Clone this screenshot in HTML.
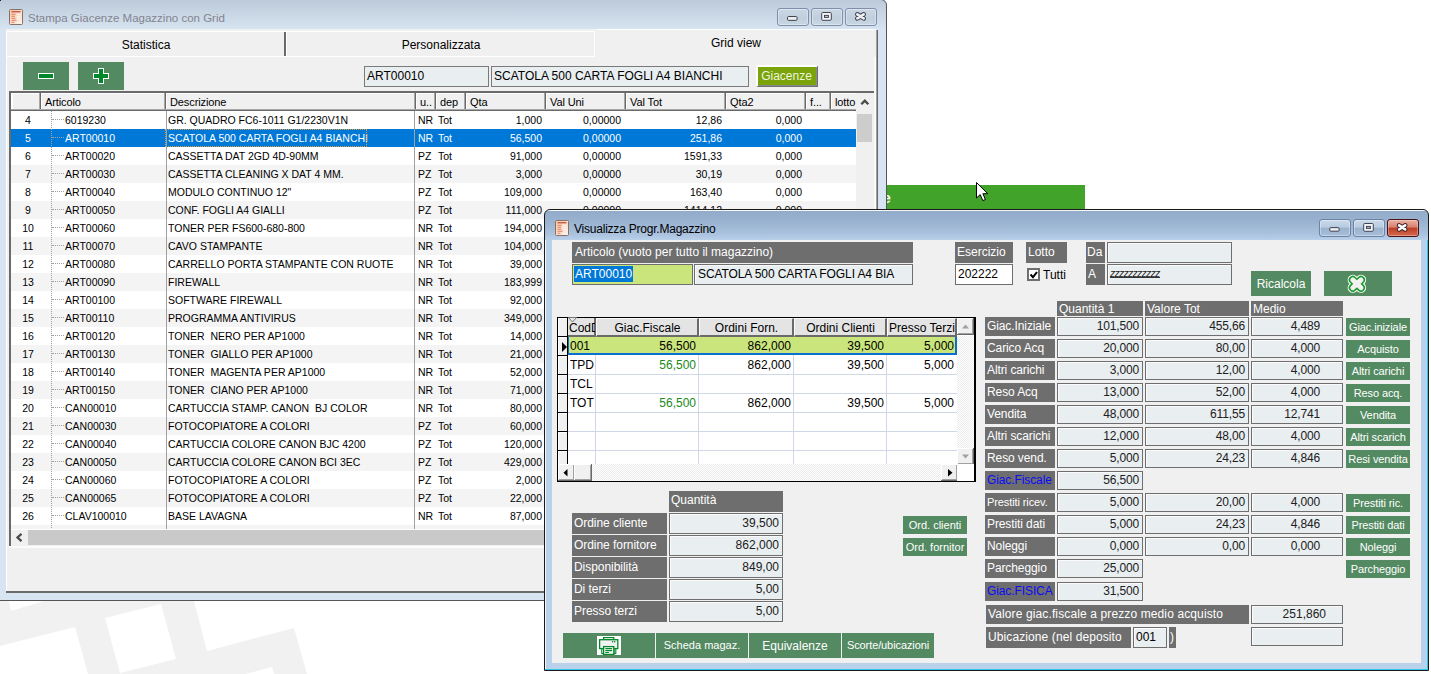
<!DOCTYPE html><html><head><meta charset="utf-8"><style>
html,body{margin:0;padding:0;}
body{width:1431px;height:674px;overflow:hidden;position:relative;background:#fff;font-family:"Liberation Sans",sans-serif;font-size:11px;color:#000;}
div{position:absolute;box-sizing:border-box;}
.t{white-space:pre;line-height:1;}
.g{font-size:10.5px;}
.w{font-size:12px;}
.lb{background:#6e6e6e;}
.in{background:#e9eef0;border:1px solid #6e6e6e;box-shadow:inset 1px 1px 0 #fff;}
.bt{background:#548a62;}
.b3{background:#f0f0f0;box-shadow:inset -1px -1px 0 #696969,inset 1px 1px 0 #fff,inset -2px -2px 0 #a0a0a0;}
.chk{background-color:#fff;background-image:linear-gradient(45deg,#ececec 25%,transparent 25%,transparent 75%,#ececec 75%),linear-gradient(45deg,#ececec 25%,transparent 25%,transparent 75%,#ececec 75%);background-size:2px 2px;background-position:0 0,1px 1px;}
</style></head><body>
<svg style="position:absolute;left:0;top:0" width="1431" height="674">
<polygon fill="#f1f1f1" points="0,601 9,601 11,611 44,601 194,601 207,651 294,628 307,674 274,674 272,667 246,674 88,674 75,627 0,646"/>
<polygon fill="#fff" points="105,618 161,604 176,659 120,673"/>
</svg>
<div style="left:886px;top:185px;width:199px;height:24px;background:#42a32b;overflow:hidden;"><div class="t" style="left:-3px;top:6px;font-size:14px;font-weight:bold;color:#fff;">e</div></div>
<div style="left:-1px;top:-1px;width:888px;height:602px;border:1px solid #555;border-radius:0 6px 0 0;background:linear-gradient(#bccad9 0px,#c9d7e5 14px,#d3e0ee 26px,#d7e4f2 30px,#d7e4f2);"></div>
<div style="left:0px;top:0px;width:1px;height:1px;background:#222;"></div>
<div style="left:9px;top:9px;width:14px;height:16px;"><svg width="14" height="16" viewBox="0 0 14 16"><defs><linearGradient id="ig1" x1="0" y1="0" x2="1" y2="1"><stop offset="0" stop-color="#f9c9a0"/><stop offset="1" stop-color="#fdf3ea"/></linearGradient></defs>
<rect x="0.5" y="0.5" width="13" height="15" rx="1" fill="url(#ig1)" stroke="#8a7068"/>
<path d="M2.5,2.8h9" stroke="#b02820" stroke-width="1"/>
<path d="M2.5,5.3h4M2.5,7.3h3.5M2.5,9.3h4M2.5,11.3h5M2.5,13.3h3" stroke="#d86a58" stroke-width="0.8"/>
<path d="M8,5.5h3M8,7.5h3M8,9.5h3M8,13.5h3" stroke="#f4f4f4" stroke-width="1"/></svg></div>
<div class="t" style="left:28px;top:13px;font-size:11.5px;color:#84848e;">Stampa Giacenze Magazzino con Grid</div>
<div style="left:777px;top:8px;width:32px;height:18px;border:1px solid #7f8fac;border-radius:3px;background:linear-gradient(#cbd7e4,#c2cfdd 50%,#bfcddc 51%,#c9d6e4);box-shadow:inset 0 0 0 1px rgba(255,255,255,.35);"></div>
<div style="left:811px;top:8px;width:32px;height:18px;border:1px solid #7f8fac;border-radius:3px;background:linear-gradient(#cbd7e4,#c2cfdd 50%,#bfcddc 51%,#c9d6e4);box-shadow:inset 0 0 0 1px rgba(255,255,255,.35);"></div>
<div style="left:845px;top:8px;width:32px;height:18px;border:1px solid #7f8fac;border-radius:3px;background:linear-gradient(#cbd7e4,#c2cfdd 50%,#bfcddc 51%,#c9d6e4);box-shadow:inset 0 0 0 1px rgba(255,255,255,.35);"></div>
<svg style="position:absolute;left:777px;top:8px" width="100" height="18">
<rect x="10.5" y="8.5" width="9.6" height="3.9" rx="1.2" fill="#ececec" stroke="#3f4454"/>
<rect x="44.7" y="4.5" width="9.6" height="7.8" rx="1" fill="#f4f4f4" stroke="#3f4454"/><rect x="47.5" y="7.4" width="3.9" height="2" fill="#c8d4e2" stroke="#3f4454" stroke-width="1"/>
<path d="M80.3,6.3L86.7,10.4M86.7,6.3L80.3,10.4" stroke="#3f4454" stroke-width="4.6" stroke-linecap="round"/>
<path d="M80.3,6.3L86.7,10.4M86.7,6.3L80.3,10.4" stroke="#f0f0f0" stroke-width="2.6" stroke-linecap="round"/>
</svg>
<div style="left:6px;top:29px;width:871px;height:563px;background:#f0f0f0;"></div>
<div style="left:6px;top:56px;width:1px;height:535px;background:#fff;"></div>
<div style="left:6px;top:56px;width:589px;height:1px;background:#fff;"></div>
<div style="left:876px;top:30px;width:1px;height:562px;background:#a0a0a0;"></div>
<div style="left:877px;top:30px;width:1px;height:562px;background:#696969;"></div>
<div style="left:6px;top:591px;width:872px;height:2px;background:#6a6a6a;"></div>
<div style="left:6px;top:31px;width:281px;height:25px;border-top:1px solid #fff;border-left:1px solid #fff;"></div>
<div style="left:284px;top:32px;width:2px;height:24px;background:#6a6a6a;"></div>
<div style="left:286px;top:31px;width:309px;height:26px;border-top:1px solid #fff;border-left:1px solid #fff;border-right:1px solid #fff;"></div>
<div style="left:596px;top:29px;width:280px;height:1px;background:#fff;"></div>
<div class="t" style="left:6px;top:39px;width:280px;text-align:center;font-size:12px;">Statistica</div>
<div class="t" style="left:287px;top:39px;width:308px;text-align:center;font-size:12px;">Personalizzata</div>
<div class="t" style="left:596px;top:37px;width:280px;text-align:center;font-size:12px;">Grid view</div>
<div style="left:23px;top:62px;width:46px;height:28px;background:#548a62;"></div>
<div style="left:78px;top:62px;width:46px;height:28px;background:#548a62;"></div>
<svg style="position:absolute;left:38px;top:68px" width="72" height="16">
<rect x="0" y="5" width="16" height="6" fill="#fff"/><rect x="1" y="6" width="14" height="4" fill="#00882a"/>
<path d="M60,0h6v5h5v6h-5v5h-6v-5h-5v-6h5z" fill="#fff"/>
<path d="M61,1h4v5h5v4h-5v5h-4v-5h-5v-4h5z" fill="#00882a"/>
</svg>
<div style="left:364px;top:66px;width:125px;height:21px;background:#e9eef0;border:1px solid #7a7a7a;"></div>
<div class="t" style="left:367px;top:70px;font-size:12px;">ART00010</div>
<div style="left:491px;top:66px;width:258px;height:21px;background:#e9eef0;border:1px solid #7a7a7a;"></div>
<div class="t" style="left:494px;top:70px;font-size:12px;">SCATOLA 500 CARTA FOGLI A4 BIANCHI</div>
<div style="left:756px;top:65px;width:62px;height:22px;background:#7aa30c;border-top:2px solid #fff;border-left:2px solid #fff;border-right:1px solid #707070;border-bottom:1px solid #707070;box-shadow:inset -1px -1px 0 #8a8a8a;"></div>
<div class="t" style="left:756px;top:70px;width:61px;text-align:center;font-size:12px;color:#eef5dc;">Giacenze</div>
<div style="left:9px;top:91px;width:865px;height:457px;border-top:2px solid #6a6a6a;border-left:2px solid #6a6a6a;background:#fff;"></div>
<div style="left:874px;top:57px;width:2px;height:534px;background:#fafafa;"></div>
<div style="left:11px;top:93px;width:845px;height:18px;background:#f0f0f0;"></div>
<div style="left:11px;top:93px;width:845px;height:1px;background:#fff;"></div>
<div style="left:11px;top:93px;width:2px;height:16px;background:#fff;"></div>
<div style="left:39px;top:93px;width:1px;height:18px;background:#a8a8a8;"></div>
<div style="left:40px;top:93px;width:1px;height:18px;background:#696969;"></div>
<div style="left:41px;top:93px;width:1px;height:16px;background:#fff;"></div>
<div style="left:164px;top:93px;width:1px;height:18px;background:#a8a8a8;"></div>
<div style="left:165px;top:93px;width:1px;height:18px;background:#696969;"></div>
<div class="t" style="left:45px;top:97px;letter-spacing:-0.1px;">Articolo</div>
<div style="left:166px;top:93px;width:1px;height:16px;background:#fff;"></div>
<div style="left:414px;top:93px;width:1px;height:18px;background:#a8a8a8;"></div>
<div style="left:415px;top:93px;width:1px;height:18px;background:#696969;"></div>
<div class="t" style="left:170px;top:97px;letter-spacing:-0.1px;">Descrizione</div>
<div style="left:416px;top:93px;width:1px;height:16px;background:#fff;"></div>
<div style="left:434px;top:93px;width:1px;height:18px;background:#a8a8a8;"></div>
<div style="left:435px;top:93px;width:1px;height:18px;background:#696969;"></div>
<div class="t" style="left:420px;top:97px;letter-spacing:-0.1px;">u..</div>
<div style="left:436px;top:93px;width:1px;height:16px;background:#fff;"></div>
<div style="left:464px;top:93px;width:1px;height:18px;background:#a8a8a8;"></div>
<div style="left:465px;top:93px;width:1px;height:18px;background:#696969;"></div>
<div class="t" style="left:440px;top:97px;letter-spacing:-0.1px;">dep</div>
<div style="left:466px;top:93px;width:1px;height:16px;background:#fff;"></div>
<div style="left:544px;top:93px;width:1px;height:18px;background:#a8a8a8;"></div>
<div style="left:545px;top:93px;width:1px;height:18px;background:#696969;"></div>
<div class="t" style="left:470px;top:97px;letter-spacing:-0.1px;">Qta</div>
<div style="left:546px;top:93px;width:1px;height:16px;background:#fff;"></div>
<div style="left:624px;top:93px;width:1px;height:18px;background:#a8a8a8;"></div>
<div style="left:625px;top:93px;width:1px;height:18px;background:#696969;"></div>
<div class="t" style="left:550px;top:97px;letter-spacing:-0.1px;">Val Uni</div>
<div style="left:626px;top:93px;width:1px;height:16px;background:#fff;"></div>
<div style="left:724px;top:93px;width:1px;height:18px;background:#a8a8a8;"></div>
<div style="left:725px;top:93px;width:1px;height:18px;background:#696969;"></div>
<div class="t" style="left:630px;top:97px;letter-spacing:-0.1px;">Val Tot</div>
<div style="left:726px;top:93px;width:1px;height:16px;background:#fff;"></div>
<div style="left:804px;top:93px;width:1px;height:18px;background:#a8a8a8;"></div>
<div style="left:805px;top:93px;width:1px;height:18px;background:#696969;"></div>
<div class="t" style="left:730px;top:97px;letter-spacing:-0.1px;">Qta2</div>
<div style="left:806px;top:93px;width:1px;height:16px;background:#fff;"></div>
<div style="left:829px;top:93px;width:1px;height:18px;background:#a8a8a8;"></div>
<div style="left:830px;top:93px;width:1px;height:18px;background:#696969;"></div>
<div class="t" style="left:810px;top:97px;letter-spacing:-0.1px;">f...</div>
<div style="left:831px;top:93px;width:1px;height:16px;background:#fff;"></div>
<div class="t" style="left:835px;top:97px;letter-spacing:-0.1px;">lotto</div>
<div style="left:11px;top:109px;width:845px;height:1px;background:#a8a8a8;"></div>
<div style="left:11px;top:110px;width:845px;height:1px;background:#696969;"></div>
<div style="left:856px;top:93px;width:18px;height:436px;background:#f0f0f0;"></div>
<div style="left:857px;top:114px;width:15px;height:28px;background:#cdcdcd;"></div>
<svg style="position:absolute;left:859px;top:97px" width="12" height="10"><path d="M2.3,7.2L5.8,3.6L9.3,7.2" fill="none" stroke="#4a4a4a" stroke-width="2.3"/></svg>
<div style="left:11px;top:111px;width:845px;height:18px;background:#fff;"></div>
<div class="t" style="left:11px;top:115px;width:34px;text-align:center;color:#000;font-size:10.5px;">4</div>
<div class="t" style="left:65px;top:115px;color:#000;font-size:10.5px;">6019230</div>
<div class="t" style="left:168px;top:115px;color:#000;font-size:10.5px;">GR. QUADRO FC6-1011 G1/2230V1N</div>
<div class="t" style="left:418px;top:115px;color:#000;font-size:10.5px;">NR</div>
<div class="t" style="left:438px;top:115px;color:#000;font-size:10.5px;">Tot</div>
<div class="t" style="left:465px;top:115px;width:77px;text-align:right;color:#000;font-size:10.5px;">1,000</div>
<div class="t" style="left:545px;top:115px;width:76px;text-align:right;color:#000;font-size:10.5px;">0,00000</div>
<div class="t" style="left:625px;top:115px;width:97px;text-align:right;color:#000;font-size:10.5px;">12,86</div>
<div class="t" style="left:725px;top:115px;width:77px;text-align:right;color:#000;font-size:10.5px;">0,000</div>
<div style="left:52px;top:119px;width:12px;height:1px;border-top:1px dotted #a0a0a0;"></div>
<div style="left:11px;top:129px;width:845px;height:18px;background:#0078d7;"></div>
<div class="t" style="left:11px;top:133px;width:34px;text-align:center;color:#fff;font-size:10.5px;">5</div>
<div class="t" style="left:65px;top:133px;color:#fff;font-size:10.5px;">ART00010</div>
<div class="t" style="left:168px;top:133px;color:#fff;font-size:10.5px;">SCATOLA 500 CARTA FOGLI A4 BIANCHI</div>
<div class="t" style="left:418px;top:133px;color:#fff;font-size:10.5px;">NR</div>
<div class="t" style="left:438px;top:133px;color:#fff;font-size:10.5px;">Tot</div>
<div class="t" style="left:465px;top:133px;width:77px;text-align:right;color:#fff;font-size:10.5px;">56,500</div>
<div class="t" style="left:545px;top:133px;width:76px;text-align:right;color:#fff;font-size:10.5px;">0,00000</div>
<div class="t" style="left:625px;top:133px;width:97px;text-align:right;color:#fff;font-size:10.5px;">251,86</div>
<div class="t" style="left:725px;top:133px;width:77px;text-align:right;color:#fff;font-size:10.5px;">0,000</div>
<div style="left:52px;top:137px;width:12px;height:1px;border-top:1px dotted #a0a0a0;"></div>
<div style="left:165px;top:129px;width:202px;height:18px;border:1px dotted #e0a040;"></div>
<div style="left:11px;top:147px;width:845px;height:18px;background:#fff;"></div>
<div class="t" style="left:11px;top:151px;width:34px;text-align:center;color:#000;font-size:10.5px;">6</div>
<div class="t" style="left:65px;top:151px;color:#000;font-size:10.5px;">ART00020</div>
<div class="t" style="left:168px;top:151px;color:#000;font-size:10.5px;">CASSETTA DAT 2GD 4D-90MM</div>
<div class="t" style="left:418px;top:151px;color:#000;font-size:10.5px;">PZ</div>
<div class="t" style="left:438px;top:151px;color:#000;font-size:10.5px;">Tot</div>
<div class="t" style="left:465px;top:151px;width:77px;text-align:right;color:#000;font-size:10.5px;">91,000</div>
<div class="t" style="left:545px;top:151px;width:76px;text-align:right;color:#000;font-size:10.5px;">0,00000</div>
<div class="t" style="left:625px;top:151px;width:97px;text-align:right;color:#000;font-size:10.5px;">1591,33</div>
<div class="t" style="left:725px;top:151px;width:77px;text-align:right;color:#000;font-size:10.5px;">0,000</div>
<div style="left:52px;top:155px;width:12px;height:1px;border-top:1px dotted #a0a0a0;"></div>
<div style="left:11px;top:165px;width:845px;height:18px;background:#f4f4f4;"></div>
<div class="t" style="left:11px;top:169px;width:34px;text-align:center;color:#000;font-size:10.5px;">7</div>
<div class="t" style="left:65px;top:169px;color:#000;font-size:10.5px;">ART00030</div>
<div class="t" style="left:168px;top:169px;color:#000;font-size:10.5px;">CASSETTA CLEANING X DAT 4 MM.</div>
<div class="t" style="left:418px;top:169px;color:#000;font-size:10.5px;">PZ</div>
<div class="t" style="left:438px;top:169px;color:#000;font-size:10.5px;">Tot</div>
<div class="t" style="left:465px;top:169px;width:77px;text-align:right;color:#000;font-size:10.5px;">3,000</div>
<div class="t" style="left:545px;top:169px;width:76px;text-align:right;color:#000;font-size:10.5px;">0,00000</div>
<div class="t" style="left:625px;top:169px;width:97px;text-align:right;color:#000;font-size:10.5px;">30,19</div>
<div class="t" style="left:725px;top:169px;width:77px;text-align:right;color:#000;font-size:10.5px;">0,000</div>
<div style="left:52px;top:173px;width:12px;height:1px;border-top:1px dotted #a0a0a0;"></div>
<div style="left:11px;top:183px;width:845px;height:18px;background:#fff;"></div>
<div class="t" style="left:11px;top:187px;width:34px;text-align:center;color:#000;font-size:10.5px;">8</div>
<div class="t" style="left:65px;top:187px;color:#000;font-size:10.5px;">ART00040</div>
<div class="t" style="left:168px;top:187px;color:#000;font-size:10.5px;">MODULO CONTINUO 12"</div>
<div class="t" style="left:418px;top:187px;color:#000;font-size:10.5px;">PZ</div>
<div class="t" style="left:438px;top:187px;color:#000;font-size:10.5px;">Tot</div>
<div class="t" style="left:465px;top:187px;width:77px;text-align:right;color:#000;font-size:10.5px;">109,000</div>
<div class="t" style="left:545px;top:187px;width:76px;text-align:right;color:#000;font-size:10.5px;">0,00000</div>
<div class="t" style="left:625px;top:187px;width:97px;text-align:right;color:#000;font-size:10.5px;">163,40</div>
<div class="t" style="left:725px;top:187px;width:77px;text-align:right;color:#000;font-size:10.5px;">0,000</div>
<div style="left:52px;top:191px;width:12px;height:1px;border-top:1px dotted #a0a0a0;"></div>
<div style="left:11px;top:201px;width:845px;height:18px;background:#f4f4f4;"></div>
<div class="t" style="left:11px;top:205px;width:34px;text-align:center;color:#000;font-size:10.5px;">9</div>
<div class="t" style="left:65px;top:205px;color:#000;font-size:10.5px;">ART00050</div>
<div class="t" style="left:168px;top:205px;color:#000;font-size:10.5px;">CONF. FOGLI A4 GIALLI</div>
<div class="t" style="left:418px;top:205px;color:#000;font-size:10.5px;">PZ</div>
<div class="t" style="left:438px;top:205px;color:#000;font-size:10.5px;">Tot</div>
<div class="t" style="left:465px;top:205px;width:77px;text-align:right;color:#000;font-size:10.5px;">111,000</div>
<div class="t" style="left:545px;top:205px;width:76px;text-align:right;color:#000;font-size:10.5px;">0,00000</div>
<div class="t" style="left:625px;top:205px;width:97px;text-align:right;color:#000;font-size:10.5px;">1414,12</div>
<div class="t" style="left:725px;top:205px;width:77px;text-align:right;color:#000;font-size:10.5px;">0,000</div>
<div style="left:52px;top:209px;width:12px;height:1px;border-top:1px dotted #a0a0a0;"></div>
<div style="left:11px;top:219px;width:845px;height:18px;background:#fff;"></div>
<div class="t" style="left:11px;top:223px;width:34px;text-align:center;color:#000;font-size:10.5px;">10</div>
<div class="t" style="left:65px;top:223px;color:#000;font-size:10.5px;">ART00060</div>
<div class="t" style="left:168px;top:223px;color:#000;font-size:10.5px;">TONER PER FS600-680-800</div>
<div class="t" style="left:418px;top:223px;color:#000;font-size:10.5px;">NR</div>
<div class="t" style="left:438px;top:223px;color:#000;font-size:10.5px;">Tot</div>
<div class="t" style="left:465px;top:223px;width:77px;text-align:right;color:#000;font-size:10.5px;">194,000</div>
<div style="left:52px;top:227px;width:12px;height:1px;border-top:1px dotted #a0a0a0;"></div>
<div style="left:11px;top:237px;width:845px;height:18px;background:#f4f4f4;"></div>
<div class="t" style="left:11px;top:241px;width:34px;text-align:center;color:#000;font-size:10.5px;">11</div>
<div class="t" style="left:65px;top:241px;color:#000;font-size:10.5px;">ART00070</div>
<div class="t" style="left:168px;top:241px;color:#000;font-size:10.5px;">CAVO STAMPANTE</div>
<div class="t" style="left:418px;top:241px;color:#000;font-size:10.5px;">NR</div>
<div class="t" style="left:438px;top:241px;color:#000;font-size:10.5px;">Tot</div>
<div class="t" style="left:465px;top:241px;width:77px;text-align:right;color:#000;font-size:10.5px;">104,000</div>
<div style="left:52px;top:245px;width:12px;height:1px;border-top:1px dotted #a0a0a0;"></div>
<div style="left:11px;top:255px;width:845px;height:18px;background:#fff;"></div>
<div class="t" style="left:11px;top:259px;width:34px;text-align:center;color:#000;font-size:10.5px;">12</div>
<div class="t" style="left:65px;top:259px;color:#000;font-size:10.5px;">ART00080</div>
<div class="t" style="left:168px;top:259px;color:#000;font-size:10.5px;">CARRELLO PORTA STAMPANTE CON RUOTE</div>
<div class="t" style="left:418px;top:259px;color:#000;font-size:10.5px;">NR</div>
<div class="t" style="left:438px;top:259px;color:#000;font-size:10.5px;">Tot</div>
<div class="t" style="left:465px;top:259px;width:77px;text-align:right;color:#000;font-size:10.5px;">39,000</div>
<div style="left:52px;top:263px;width:12px;height:1px;border-top:1px dotted #a0a0a0;"></div>
<div style="left:11px;top:273px;width:845px;height:18px;background:#f4f4f4;"></div>
<div class="t" style="left:11px;top:277px;width:34px;text-align:center;color:#000;font-size:10.5px;">13</div>
<div class="t" style="left:65px;top:277px;color:#000;font-size:10.5px;">ART00090</div>
<div class="t" style="left:168px;top:277px;color:#000;font-size:10.5px;">FIREWALL</div>
<div class="t" style="left:418px;top:277px;color:#000;font-size:10.5px;">NR</div>
<div class="t" style="left:438px;top:277px;color:#000;font-size:10.5px;">Tot</div>
<div class="t" style="left:465px;top:277px;width:77px;text-align:right;color:#000;font-size:10.5px;">183,999</div>
<div style="left:52px;top:281px;width:12px;height:1px;border-top:1px dotted #a0a0a0;"></div>
<div style="left:11px;top:291px;width:845px;height:18px;background:#fff;"></div>
<div class="t" style="left:11px;top:295px;width:34px;text-align:center;color:#000;font-size:10.5px;">14</div>
<div class="t" style="left:65px;top:295px;color:#000;font-size:10.5px;">ART00100</div>
<div class="t" style="left:168px;top:295px;color:#000;font-size:10.5px;">SOFTWARE FIREWALL</div>
<div class="t" style="left:418px;top:295px;color:#000;font-size:10.5px;">NR</div>
<div class="t" style="left:438px;top:295px;color:#000;font-size:10.5px;">Tot</div>
<div class="t" style="left:465px;top:295px;width:77px;text-align:right;color:#000;font-size:10.5px;">92,000</div>
<div style="left:52px;top:299px;width:12px;height:1px;border-top:1px dotted #a0a0a0;"></div>
<div style="left:11px;top:309px;width:845px;height:18px;background:#f4f4f4;"></div>
<div class="t" style="left:11px;top:313px;width:34px;text-align:center;color:#000;font-size:10.5px;">15</div>
<div class="t" style="left:65px;top:313px;color:#000;font-size:10.5px;">ART00110</div>
<div class="t" style="left:168px;top:313px;color:#000;font-size:10.5px;">PROGRAMMA ANTIVIRUS</div>
<div class="t" style="left:418px;top:313px;color:#000;font-size:10.5px;">NR</div>
<div class="t" style="left:438px;top:313px;color:#000;font-size:10.5px;">Tot</div>
<div class="t" style="left:465px;top:313px;width:77px;text-align:right;color:#000;font-size:10.5px;">349,000</div>
<div style="left:52px;top:317px;width:12px;height:1px;border-top:1px dotted #a0a0a0;"></div>
<div style="left:11px;top:327px;width:845px;height:18px;background:#fff;"></div>
<div class="t" style="left:11px;top:331px;width:34px;text-align:center;color:#000;font-size:10.5px;">16</div>
<div class="t" style="left:65px;top:331px;color:#000;font-size:10.5px;">ART00120</div>
<div class="t" style="left:168px;top:331px;color:#000;font-size:10.5px;">TONER  NERO PER AP1000</div>
<div class="t" style="left:418px;top:331px;color:#000;font-size:10.5px;">NR</div>
<div class="t" style="left:438px;top:331px;color:#000;font-size:10.5px;">Tot</div>
<div class="t" style="left:465px;top:331px;width:77px;text-align:right;color:#000;font-size:10.5px;">14,000</div>
<div style="left:52px;top:335px;width:12px;height:1px;border-top:1px dotted #a0a0a0;"></div>
<div style="left:11px;top:345px;width:845px;height:18px;background:#f4f4f4;"></div>
<div class="t" style="left:11px;top:349px;width:34px;text-align:center;color:#000;font-size:10.5px;">17</div>
<div class="t" style="left:65px;top:349px;color:#000;font-size:10.5px;">ART00130</div>
<div class="t" style="left:168px;top:349px;color:#000;font-size:10.5px;">TONER  GIALLO PER AP1000</div>
<div class="t" style="left:418px;top:349px;color:#000;font-size:10.5px;">NR</div>
<div class="t" style="left:438px;top:349px;color:#000;font-size:10.5px;">Tot</div>
<div class="t" style="left:465px;top:349px;width:77px;text-align:right;color:#000;font-size:10.5px;">21,000</div>
<div style="left:52px;top:353px;width:12px;height:1px;border-top:1px dotted #a0a0a0;"></div>
<div style="left:11px;top:363px;width:845px;height:18px;background:#fff;"></div>
<div class="t" style="left:11px;top:367px;width:34px;text-align:center;color:#000;font-size:10.5px;">18</div>
<div class="t" style="left:65px;top:367px;color:#000;font-size:10.5px;">ART00140</div>
<div class="t" style="left:168px;top:367px;color:#000;font-size:10.5px;">TONER  MAGENTA PER AP1000</div>
<div class="t" style="left:418px;top:367px;color:#000;font-size:10.5px;">NR</div>
<div class="t" style="left:438px;top:367px;color:#000;font-size:10.5px;">Tot</div>
<div class="t" style="left:465px;top:367px;width:77px;text-align:right;color:#000;font-size:10.5px;">52,000</div>
<div style="left:52px;top:371px;width:12px;height:1px;border-top:1px dotted #a0a0a0;"></div>
<div style="left:11px;top:381px;width:845px;height:18px;background:#f4f4f4;"></div>
<div class="t" style="left:11px;top:385px;width:34px;text-align:center;color:#000;font-size:10.5px;">19</div>
<div class="t" style="left:65px;top:385px;color:#000;font-size:10.5px;">ART00150</div>
<div class="t" style="left:168px;top:385px;color:#000;font-size:10.5px;">TONER  CIANO PER AP1000</div>
<div class="t" style="left:418px;top:385px;color:#000;font-size:10.5px;">NR</div>
<div class="t" style="left:438px;top:385px;color:#000;font-size:10.5px;">Tot</div>
<div class="t" style="left:465px;top:385px;width:77px;text-align:right;color:#000;font-size:10.5px;">71,000</div>
<div style="left:52px;top:389px;width:12px;height:1px;border-top:1px dotted #a0a0a0;"></div>
<div style="left:11px;top:399px;width:845px;height:18px;background:#fff;"></div>
<div class="t" style="left:11px;top:403px;width:34px;text-align:center;color:#000;font-size:10.5px;">20</div>
<div class="t" style="left:65px;top:403px;color:#000;font-size:10.5px;">CAN00010</div>
<div class="t" style="left:168px;top:403px;color:#000;font-size:10.5px;">CARTUCCIA STAMP. CANON  BJ COLOR</div>
<div class="t" style="left:418px;top:403px;color:#000;font-size:10.5px;">NR</div>
<div class="t" style="left:438px;top:403px;color:#000;font-size:10.5px;">Tot</div>
<div class="t" style="left:465px;top:403px;width:77px;text-align:right;color:#000;font-size:10.5px;">80,000</div>
<div style="left:52px;top:407px;width:12px;height:1px;border-top:1px dotted #a0a0a0;"></div>
<div style="left:11px;top:417px;width:845px;height:18px;background:#f4f4f4;"></div>
<div class="t" style="left:11px;top:421px;width:34px;text-align:center;color:#000;font-size:10.5px;">21</div>
<div class="t" style="left:65px;top:421px;color:#000;font-size:10.5px;">CAN00030</div>
<div class="t" style="left:168px;top:421px;color:#000;font-size:10.5px;">FOTOCOPIATORE A COLORI</div>
<div class="t" style="left:418px;top:421px;color:#000;font-size:10.5px;">PZ</div>
<div class="t" style="left:438px;top:421px;color:#000;font-size:10.5px;">Tot</div>
<div class="t" style="left:465px;top:421px;width:77px;text-align:right;color:#000;font-size:10.5px;">60,000</div>
<div style="left:52px;top:425px;width:12px;height:1px;border-top:1px dotted #a0a0a0;"></div>
<div style="left:11px;top:435px;width:845px;height:18px;background:#fff;"></div>
<div class="t" style="left:11px;top:439px;width:34px;text-align:center;color:#000;font-size:10.5px;">22</div>
<div class="t" style="left:65px;top:439px;color:#000;font-size:10.5px;">CAN00040</div>
<div class="t" style="left:168px;top:439px;color:#000;font-size:10.5px;">CARTUCCIA COLORE CANON BJC 4200</div>
<div class="t" style="left:418px;top:439px;color:#000;font-size:10.5px;">PZ</div>
<div class="t" style="left:438px;top:439px;color:#000;font-size:10.5px;">Tot</div>
<div class="t" style="left:465px;top:439px;width:77px;text-align:right;color:#000;font-size:10.5px;">120,000</div>
<div style="left:52px;top:443px;width:12px;height:1px;border-top:1px dotted #a0a0a0;"></div>
<div style="left:11px;top:453px;width:845px;height:18px;background:#f4f4f4;"></div>
<div class="t" style="left:11px;top:457px;width:34px;text-align:center;color:#000;font-size:10.5px;">23</div>
<div class="t" style="left:65px;top:457px;color:#000;font-size:10.5px;">CAN00050</div>
<div class="t" style="left:168px;top:457px;color:#000;font-size:10.5px;">CARTUCCIA COLORE CANON BCI 3EC</div>
<div class="t" style="left:418px;top:457px;color:#000;font-size:10.5px;">PZ</div>
<div class="t" style="left:438px;top:457px;color:#000;font-size:10.5px;">Tot</div>
<div class="t" style="left:465px;top:457px;width:77px;text-align:right;color:#000;font-size:10.5px;">429,000</div>
<div style="left:52px;top:461px;width:12px;height:1px;border-top:1px dotted #a0a0a0;"></div>
<div style="left:11px;top:471px;width:845px;height:18px;background:#fff;"></div>
<div class="t" style="left:11px;top:475px;width:34px;text-align:center;color:#000;font-size:10.5px;">24</div>
<div class="t" style="left:65px;top:475px;color:#000;font-size:10.5px;">CAN00060</div>
<div class="t" style="left:168px;top:475px;color:#000;font-size:10.5px;">FOTOCOPIATORE A COLORI</div>
<div class="t" style="left:418px;top:475px;color:#000;font-size:10.5px;">PZ</div>
<div class="t" style="left:438px;top:475px;color:#000;font-size:10.5px;">Tot</div>
<div class="t" style="left:465px;top:475px;width:77px;text-align:right;color:#000;font-size:10.5px;">2,000</div>
<div style="left:52px;top:479px;width:12px;height:1px;border-top:1px dotted #a0a0a0;"></div>
<div style="left:11px;top:489px;width:845px;height:18px;background:#f4f4f4;"></div>
<div class="t" style="left:11px;top:493px;width:34px;text-align:center;color:#000;font-size:10.5px;">25</div>
<div class="t" style="left:65px;top:493px;color:#000;font-size:10.5px;">CAN00065</div>
<div class="t" style="left:168px;top:493px;color:#000;font-size:10.5px;">FOTOCOPIATORE A COLORI</div>
<div class="t" style="left:418px;top:493px;color:#000;font-size:10.5px;">PZ</div>
<div class="t" style="left:438px;top:493px;color:#000;font-size:10.5px;">Tot</div>
<div class="t" style="left:465px;top:493px;width:77px;text-align:right;color:#000;font-size:10.5px;">22,000</div>
<div style="left:52px;top:497px;width:12px;height:1px;border-top:1px dotted #a0a0a0;"></div>
<div style="left:11px;top:507px;width:845px;height:18px;background:#fff;"></div>
<div class="t" style="left:11px;top:511px;width:34px;text-align:center;color:#000;font-size:10.5px;">26</div>
<div class="t" style="left:65px;top:511px;color:#000;font-size:10.5px;">CLAV100010</div>
<div class="t" style="left:168px;top:511px;color:#000;font-size:10.5px;">BASE LAVAGNA</div>
<div class="t" style="left:418px;top:511px;color:#000;font-size:10.5px;">NR</div>
<div class="t" style="left:438px;top:511px;color:#000;font-size:10.5px;">Tot</div>
<div class="t" style="left:465px;top:511px;width:77px;text-align:right;color:#000;font-size:10.5px;">87,000</div>
<div style="left:52px;top:515px;width:12px;height:1px;border-top:1px dotted #a0a0a0;"></div>
<div style="left:11px;top:525px;width:845px;height:4px;background:#f4f4f4;"></div>
<div style="left:51px;top:111px;width:1px;height:417px;border-left:1px dotted #a0a0a0;"></div>
<div style="left:166px;top:111px;width:1px;height:418px;background:#a0a0a0;"></div>
<div style="left:414px;top:111px;width:1px;height:418px;background:#a0a0a0;"></div>
<div style="left:11px;top:529px;width:865px;height:1px;background:#fff;"></div>
<div style="left:11px;top:530px;width:845px;height:16px;background:#f0f0f0;"></div>
<div style="left:28px;top:530px;width:828px;height:15px;background:#c9c9c9;"></div>
<div style="left:9px;top:546px;width:867px;height:2px;background:#fbfbfb;"></div>
<svg style="position:absolute;left:14px;top:532px" width="10" height="12"><path d="M7.5,1.8L3.5,5.5L7.5,9.2" fill="none" stroke="#4a4a4a" stroke-width="2.3"/></svg>
<div style="left:544px;top:209px;width:885px;height:462px;border:1px solid #1a1a1a;border-radius:6px 6px 0 0;background:linear-gradient(#f4f6f8 0px,#f4f6f8 1px,#92abca 1px,#9ab3d0 12px,#aac2de 24px,#b8d0e9 30px,#b9d1ea);"></div>
<div style="left:1427px;top:240px;width:1px;height:430px;background:#30c8e8;"></div>
<div style="left:545px;top:240px;width:1px;height:429px;background:#f4f8fc;"></div>
<div style="left:545px;top:669px;width:883px;height:1px;background:#30c8e8;"></div>
<div style="left:555px;top:220px;width:14px;height:16px;"><svg width="14" height="16" viewBox="0 0 14 16"><defs><linearGradient id="ig2" x1="0" y1="0" x2="1" y2="1"><stop offset="0" stop-color="#f9c9a0"/><stop offset="1" stop-color="#fdf3ea"/></linearGradient></defs>
<rect x="0.5" y="0.5" width="13" height="15" rx="1" fill="url(#ig2)" stroke="#8a7068"/>
<path d="M2.5,2.8h9" stroke="#b02820" stroke-width="1"/>
<path d="M2.5,5.3h4M2.5,7.3h3.5M2.5,9.3h4M2.5,11.3h5M2.5,13.3h3" stroke="#d86a58" stroke-width="0.8"/>
<path d="M8,5.5h3M8,7.5h3M8,9.5h3M8,13.5h3" stroke="#f4f4f4" stroke-width="1"/></svg></div>
<div class="t" style="left:574px;top:223px;font-size:12px;letter-spacing:-0.22px;color:#000;">Visualizza Progr.Magazzino</div>
<div style="left:1319px;top:219px;width:32px;height:18px;border:1px solid #6c84a4;border-radius:3px;background:linear-gradient(#cad9ea,#b8cbe0 45%,#9cb3cf 50%,#a8bed8);box-shadow:inset 0 0 0 1px rgba(255,255,255,.35);"></div>
<div style="left:1353px;top:219px;width:32px;height:18px;border:1px solid #6c84a4;border-radius:3px;background:linear-gradient(#cad9ea,#b8cbe0 45%,#9cb3cf 50%,#a8bed8);box-shadow:inset 0 0 0 1px rgba(255,255,255,.35);"></div>
<div style="left:1387px;top:219px;width:32px;height:18px;border:1px solid #4a1418;border-radius:3px;background:linear-gradient(#eab0a0,#d88070 45%,#bc3e22 50%,#d46a50);box-shadow:inset 0 0 0 1px rgba(255,255,255,.3);"></div>
<svg style="position:absolute;left:1319px;top:219px" width="100" height="18">
<rect x="10.7" y="8.6" width="9.5" height="3.6" rx="1.2" fill="#ececec" stroke="#3f4454"/>
<rect x="44.7" y="4.5" width="9.6" height="7.8" rx="1" fill="#f4f4f4" stroke="#3f4454"/><rect x="47.5" y="7.4" width="3.9" height="2" fill="#a8c0dc" stroke="#3f4454" stroke-width="1"/>
<path d="M80.1,6.3L86.2,10.4M86.2,6.3L80.1,10.4" stroke="#3a2024" stroke-width="4.6" stroke-linecap="round"/>
<path d="M80.1,6.3L86.2,10.4M86.2,6.3L80.1,10.4" stroke="#fff" stroke-width="2.6" stroke-linecap="round"/>
</svg>
<div style="left:552px;top:240px;width:869px;height:423px;background:#f0f0f0;"></div>
<div style="left:572px;top:242px;width:341px;height:21px;background:#6e6e6e;"></div>
<div class="t" style="left:575px;top:246px;font-size:12px;color:#fff;">Articolo (vuoto per tutto il magazzino)</div>
<div style="left:572px;top:264px;width:121px;height:21px;background:#c9e57b;border:1px solid #6e6e6e;"></div>
<div style="left:574px;top:266px;width:59px;height:16px;background:#0078d7;"></div>
<div class="t" style="left:575px;top:268px;font-size:12px;color:#fff;">ART00010</div>
<div style="left:694px;top:264px;width:219px;height:21px;background:#e9eef0;border:1px solid #6e6e6e;box-shadow:inset 1px 1px 0 #fafafa;"></div>
<div class="t" style="left:698px;top:268px;font-size:12px;letter-spacing:-0.1px;">SCATOLA 500 CARTA FOGLI A4 BIA</div>
<div style="left:955px;top:242px;width:58px;height:21px;background:#6e6e6e;"></div>
<div class="t" style="left:957px;top:246px;font-size:12px;color:#fff;">Esercizio</div>
<div style="left:955px;top:264px;width:58px;height:21px;background:#fff;border:1px solid #6e6e6e;"></div>
<div class="t" style="left:958px;top:268px;font-size:12px;">202222</div>
<div style="left:1026px;top:242px;width:41px;height:21px;background:#6e6e6e;"></div>
<div class="t" style="left:1028px;top:246px;font-size:12px;color:#fff;">Lotto</div>
<div style="left:1027px;top:268px;width:13px;height:13px;background:#fff;border:2px solid #6e6e6e;"></div>
<svg style="position:absolute;left:1029px;top:270px" width="10" height="10"><path d="M1.5,4.5L4,7.2L8,2" fill="none" stroke="#000" stroke-width="2"/></svg>
<div class="t" style="left:1043px;top:269px;font-size:12px;">Tutti</div>
<div style="left:1086px;top:242px;width:19px;height:21px;background:#6e6e6e;"></div>
<div class="t" style="left:1087px;top:246px;font-size:12px;color:#fff;">Da</div>
<div style="left:1107px;top:242px;width:125px;height:21px;background:#e9eef0;border:1px solid #6e6e6e;box-shadow:inset 1px 1px 0 #fafafa;"></div>
<div style="left:1086px;top:264px;width:19px;height:21px;background:#6e6e6e;"></div>
<div class="t" style="left:1088px;top:268px;font-size:12px;color:#fff;">A</div>
<div style="left:1107px;top:264px;width:125px;height:21px;background:#e9eef0;border:1px solid #6e6e6e;box-shadow:inset 1px 1px 0 #fafafa;"></div>
<div class="t" style="left:1110px;top:268px;font-size:10.5px;font-style:italic;letter-spacing:-0.75px;color:#222;">zzzzzzzzzzz</div>
<div style="left:1110px;top:277px;width:50px;height:1px;background:#333;"></div>
<div style="left:1251px;top:271px;width:60px;height:25px;background:#548a62;"></div>
<div class="t" style="left:1251px;top:278px;width:60px;text-align:center;font-size:12px;color:#fff;">Ricalcola</div>
<div style="left:1324px;top:271px;width:68px;height:25px;background:#548a62;"></div>
<svg style="position:absolute;left:1345px;top:273px" width="24" height="22">
<path d="M7.8,6.9L16,14.7M16,6.9L7.8,14.7" stroke="#fff" stroke-width="10.3" stroke-linecap="round"/>
<path d="M7.8,6.9L16,14.7M16,6.9L7.8,14.7" stroke="#1a9a2a" stroke-width="8.2" stroke-linecap="round"/>
<path d="M7.8,6.9L16,14.7M16,6.9L7.8,14.7" stroke="#f2f2f2" stroke-width="5" stroke-linecap="round"/>
</svg>
<div style="left:1057px;top:301px;width:86px;height:15px;background:#6e6e6e;"></div>
<div class="t" style="left:1059px;top:303px;font-size:12px;color:#fff;">Quantità 1</div>
<div style="left:1145px;top:301px;width:104px;height:15px;background:#6e6e6e;"></div>
<div class="t" style="left:1147px;top:303px;font-size:12px;color:#fff;">Valore Tot</div>
<div style="left:1251px;top:301px;width:92px;height:15px;background:#6e6e6e;"></div>
<div class="t" style="left:1253px;top:303px;font-size:12px;color:#fff;">Medio</div>
<div style="left:985px;top:317px;width:70px;height:19px;background:#6e6e6e;"></div>
<div class="t" style="left:987px;top:320px;font-size:12px;color:#fff;letter-spacing:-0.1px;">Giac.Iniziale</div>
<div style="left:1057px;top:317px;width:86px;height:19px;background:#e9eef0;border:1px solid #6e6e6e;box-shadow:inset 1px 1px 0 #fafafa;"></div>
<div class="t" style="left:1057px;top:320px;width:82px;text-align:right;font-size:12px;color:#202020;letter-spacing:-0.15px;">101,500</div>
<div style="left:1145px;top:317px;width:104px;height:19px;background:#e9eef0;border:1px solid #6e6e6e;box-shadow:inset 1px 1px 0 #fafafa;"></div>
<div class="t" style="left:1145px;top:320px;width:100px;text-align:right;font-size:12px;color:#202020;letter-spacing:-0.15px;">455,66</div>
<div style="left:1251px;top:317px;width:92px;height:19px;background:#e9eef0;border:1px solid #6e6e6e;box-shadow:inset 1px 1px 0 #fafafa;"></div>
<div class="t" style="left:1251px;top:320px;width:69px;text-align:right;font-size:12px;color:#202020;letter-spacing:-0.15px;">4,489</div>
<div style="left:1346px;top:318px;width:64px;height:18px;background:#548a62;"></div>
<div class="t" style="left:1346px;top:322px;width:64px;text-align:center;font-size:11px;color:#fff;letter-spacing:-0.1px;">Giac.iniziale</div>
<div style="left:985px;top:339px;width:70px;height:19px;background:#6e6e6e;"></div>
<div class="t" style="left:987px;top:342px;font-size:12px;color:#fff;letter-spacing:-0.1px;">Carico Acq</div>
<div style="left:1057px;top:339px;width:86px;height:19px;background:#e9eef0;border:1px solid #6e6e6e;box-shadow:inset 1px 1px 0 #fafafa;"></div>
<div class="t" style="left:1057px;top:342px;width:82px;text-align:right;font-size:12px;color:#202020;letter-spacing:-0.15px;">20,000</div>
<div style="left:1145px;top:339px;width:104px;height:19px;background:#e9eef0;border:1px solid #6e6e6e;box-shadow:inset 1px 1px 0 #fafafa;"></div>
<div class="t" style="left:1145px;top:342px;width:100px;text-align:right;font-size:12px;color:#202020;letter-spacing:-0.15px;">80,00</div>
<div style="left:1251px;top:339px;width:92px;height:19px;background:#e9eef0;border:1px solid #6e6e6e;box-shadow:inset 1px 1px 0 #fafafa;"></div>
<div class="t" style="left:1251px;top:342px;width:69px;text-align:right;font-size:12px;color:#202020;letter-spacing:-0.15px;">4,000</div>
<div style="left:1346px;top:340px;width:64px;height:18px;background:#548a62;"></div>
<div class="t" style="left:1346px;top:344px;width:64px;text-align:center;font-size:11px;color:#fff;letter-spacing:-0.1px;">Acquisto</div>
<div style="left:985px;top:361px;width:70px;height:19px;background:#6e6e6e;"></div>
<div class="t" style="left:987px;top:364px;font-size:12px;color:#fff;letter-spacing:-0.1px;">Altri carichi</div>
<div style="left:1057px;top:361px;width:86px;height:19px;background:#e9eef0;border:1px solid #6e6e6e;box-shadow:inset 1px 1px 0 #fafafa;"></div>
<div class="t" style="left:1057px;top:364px;width:82px;text-align:right;font-size:12px;color:#202020;letter-spacing:-0.15px;">3,000</div>
<div style="left:1145px;top:361px;width:104px;height:19px;background:#e9eef0;border:1px solid #6e6e6e;box-shadow:inset 1px 1px 0 #fafafa;"></div>
<div class="t" style="left:1145px;top:364px;width:100px;text-align:right;font-size:12px;color:#202020;letter-spacing:-0.15px;">12,00</div>
<div style="left:1251px;top:361px;width:92px;height:19px;background:#e9eef0;border:1px solid #6e6e6e;box-shadow:inset 1px 1px 0 #fafafa;"></div>
<div class="t" style="left:1251px;top:364px;width:69px;text-align:right;font-size:12px;color:#202020;letter-spacing:-0.15px;">4,000</div>
<div style="left:1346px;top:362px;width:64px;height:18px;background:#548a62;"></div>
<div class="t" style="left:1346px;top:366px;width:64px;text-align:center;font-size:11px;color:#fff;letter-spacing:-0.1px;">Altri carichi</div>
<div style="left:985px;top:383px;width:70px;height:19px;background:#6e6e6e;"></div>
<div class="t" style="left:987px;top:386px;font-size:12px;color:#fff;letter-spacing:-0.1px;">Reso Acq</div>
<div style="left:1057px;top:383px;width:86px;height:19px;background:#e9eef0;border:1px solid #6e6e6e;box-shadow:inset 1px 1px 0 #fafafa;"></div>
<div class="t" style="left:1057px;top:386px;width:82px;text-align:right;font-size:12px;color:#202020;letter-spacing:-0.15px;">13,000</div>
<div style="left:1145px;top:383px;width:104px;height:19px;background:#e9eef0;border:1px solid #6e6e6e;box-shadow:inset 1px 1px 0 #fafafa;"></div>
<div class="t" style="left:1145px;top:386px;width:100px;text-align:right;font-size:12px;color:#202020;letter-spacing:-0.15px;">52,00</div>
<div style="left:1251px;top:383px;width:92px;height:19px;background:#e9eef0;border:1px solid #6e6e6e;box-shadow:inset 1px 1px 0 #fafafa;"></div>
<div class="t" style="left:1251px;top:386px;width:69px;text-align:right;font-size:12px;color:#202020;letter-spacing:-0.15px;">4,000</div>
<div style="left:1346px;top:384px;width:64px;height:18px;background:#548a62;"></div>
<div class="t" style="left:1346px;top:388px;width:64px;text-align:center;font-size:11px;color:#fff;letter-spacing:-0.1px;">Reso acq.</div>
<div style="left:985px;top:405px;width:70px;height:19px;background:#6e6e6e;"></div>
<div class="t" style="left:987px;top:408px;font-size:12px;color:#fff;letter-spacing:-0.1px;">Vendita</div>
<div style="left:1057px;top:405px;width:86px;height:19px;background:#e9eef0;border:1px solid #6e6e6e;box-shadow:inset 1px 1px 0 #fafafa;"></div>
<div class="t" style="left:1057px;top:408px;width:82px;text-align:right;font-size:12px;color:#202020;letter-spacing:-0.15px;">48,000</div>
<div style="left:1145px;top:405px;width:104px;height:19px;background:#e9eef0;border:1px solid #6e6e6e;box-shadow:inset 1px 1px 0 #fafafa;"></div>
<div class="t" style="left:1145px;top:408px;width:100px;text-align:right;font-size:12px;color:#202020;letter-spacing:-0.15px;">611,55</div>
<div style="left:1251px;top:405px;width:92px;height:19px;background:#e9eef0;border:1px solid #6e6e6e;box-shadow:inset 1px 1px 0 #fafafa;"></div>
<div class="t" style="left:1251px;top:408px;width:69px;text-align:right;font-size:12px;color:#202020;letter-spacing:-0.15px;">12,741</div>
<div style="left:1346px;top:406px;width:64px;height:18px;background:#548a62;"></div>
<div class="t" style="left:1346px;top:410px;width:64px;text-align:center;font-size:11px;color:#fff;letter-spacing:-0.1px;">Vendita</div>
<div style="left:985px;top:427px;width:70px;height:19px;background:#6e6e6e;"></div>
<div class="t" style="left:987px;top:430px;font-size:12px;color:#fff;letter-spacing:-0.1px;">Altri scarichi</div>
<div style="left:1057px;top:427px;width:86px;height:19px;background:#e9eef0;border:1px solid #6e6e6e;box-shadow:inset 1px 1px 0 #fafafa;"></div>
<div class="t" style="left:1057px;top:430px;width:82px;text-align:right;font-size:12px;color:#202020;letter-spacing:-0.15px;">12,000</div>
<div style="left:1145px;top:427px;width:104px;height:19px;background:#e9eef0;border:1px solid #6e6e6e;box-shadow:inset 1px 1px 0 #fafafa;"></div>
<div class="t" style="left:1145px;top:430px;width:100px;text-align:right;font-size:12px;color:#202020;letter-spacing:-0.15px;">48,00</div>
<div style="left:1251px;top:427px;width:92px;height:19px;background:#e9eef0;border:1px solid #6e6e6e;box-shadow:inset 1px 1px 0 #fafafa;"></div>
<div class="t" style="left:1251px;top:430px;width:69px;text-align:right;font-size:12px;color:#202020;letter-spacing:-0.15px;">4,000</div>
<div style="left:1346px;top:428px;width:64px;height:18px;background:#548a62;"></div>
<div class="t" style="left:1346px;top:432px;width:64px;text-align:center;font-size:11px;color:#fff;letter-spacing:-0.1px;">Altri scarich</div>
<div style="left:985px;top:449px;width:70px;height:19px;background:#6e6e6e;"></div>
<div class="t" style="left:987px;top:452px;font-size:12px;color:#fff;letter-spacing:-0.1px;">Reso vend.</div>
<div style="left:1057px;top:449px;width:86px;height:19px;background:#e9eef0;border:1px solid #6e6e6e;box-shadow:inset 1px 1px 0 #fafafa;"></div>
<div class="t" style="left:1057px;top:452px;width:82px;text-align:right;font-size:12px;color:#202020;letter-spacing:-0.15px;">5,000</div>
<div style="left:1145px;top:449px;width:104px;height:19px;background:#e9eef0;border:1px solid #6e6e6e;box-shadow:inset 1px 1px 0 #fafafa;"></div>
<div class="t" style="left:1145px;top:452px;width:100px;text-align:right;font-size:12px;color:#202020;letter-spacing:-0.15px;">24,23</div>
<div style="left:1251px;top:449px;width:92px;height:19px;background:#e9eef0;border:1px solid #6e6e6e;box-shadow:inset 1px 1px 0 #fafafa;"></div>
<div class="t" style="left:1251px;top:452px;width:69px;text-align:right;font-size:12px;color:#202020;letter-spacing:-0.15px;">4,846</div>
<div style="left:1346px;top:450px;width:64px;height:18px;background:#548a62;"></div>
<div class="t" style="left:1346px;top:454px;width:64px;text-align:center;font-size:11px;color:#fff;letter-spacing:-0.1px;">Resi vendita</div>
<div style="left:985px;top:471px;width:70px;height:19px;background:#6e6e6e;"></div>
<div class="t" style="left:987px;top:474px;font-size:12px;color:#0c0cf8;letter-spacing:-0.1px;">Giac.Fiscale</div>
<div style="left:1057px;top:471px;width:86px;height:19px;background:#e9eef0;border:1px solid #6e6e6e;box-shadow:inset 1px 1px 0 #fafafa;"></div>
<div class="t" style="left:1057px;top:474px;width:82px;text-align:right;font-size:12px;color:#202020;letter-spacing:-0.15px;">56,500</div>
<div style="left:985px;top:493px;width:70px;height:19px;background:#6e6e6e;"></div>
<div class="t" style="left:987px;top:497px;font-size:11px;color:#fff;letter-spacing:-0.1px;">Prestiti ricev.</div>
<div style="left:1057px;top:493px;width:86px;height:19px;background:#e9eef0;border:1px solid #6e6e6e;box-shadow:inset 1px 1px 0 #fafafa;"></div>
<div class="t" style="left:1057px;top:496px;width:82px;text-align:right;font-size:12px;color:#202020;letter-spacing:-0.15px;">5,000</div>
<div style="left:1145px;top:493px;width:104px;height:19px;background:#e9eef0;border:1px solid #6e6e6e;box-shadow:inset 1px 1px 0 #fafafa;"></div>
<div class="t" style="left:1145px;top:496px;width:100px;text-align:right;font-size:12px;color:#202020;letter-spacing:-0.15px;">20,00</div>
<div style="left:1251px;top:493px;width:92px;height:19px;background:#e9eef0;border:1px solid #6e6e6e;box-shadow:inset 1px 1px 0 #fafafa;"></div>
<div class="t" style="left:1251px;top:496px;width:69px;text-align:right;font-size:12px;color:#202020;letter-spacing:-0.15px;">4,000</div>
<div style="left:1346px;top:494px;width:64px;height:18px;background:#548a62;"></div>
<div class="t" style="left:1346px;top:498px;width:64px;text-align:center;font-size:11px;color:#fff;letter-spacing:-0.1px;">Prestiti ric.</div>
<div style="left:985px;top:515px;width:70px;height:19px;background:#6e6e6e;"></div>
<div class="t" style="left:987px;top:518px;font-size:12px;color:#fff;letter-spacing:-0.1px;">Prestiti dati</div>
<div style="left:1057px;top:515px;width:86px;height:19px;background:#e9eef0;border:1px solid #6e6e6e;box-shadow:inset 1px 1px 0 #fafafa;"></div>
<div class="t" style="left:1057px;top:518px;width:82px;text-align:right;font-size:12px;color:#202020;letter-spacing:-0.15px;">5,000</div>
<div style="left:1145px;top:515px;width:104px;height:19px;background:#e9eef0;border:1px solid #6e6e6e;box-shadow:inset 1px 1px 0 #fafafa;"></div>
<div class="t" style="left:1145px;top:518px;width:100px;text-align:right;font-size:12px;color:#202020;letter-spacing:-0.15px;">24,23</div>
<div style="left:1251px;top:515px;width:92px;height:19px;background:#e9eef0;border:1px solid #6e6e6e;box-shadow:inset 1px 1px 0 #fafafa;"></div>
<div class="t" style="left:1251px;top:518px;width:69px;text-align:right;font-size:12px;color:#202020;letter-spacing:-0.15px;">4,846</div>
<div style="left:1346px;top:516px;width:64px;height:18px;background:#548a62;"></div>
<div class="t" style="left:1346px;top:520px;width:64px;text-align:center;font-size:11px;color:#fff;letter-spacing:-0.1px;">Prestiti dati</div>
<div style="left:985px;top:537px;width:70px;height:19px;background:#6e6e6e;"></div>
<div class="t" style="left:987px;top:540px;font-size:12px;color:#fff;letter-spacing:-0.1px;">Noleggi</div>
<div style="left:1057px;top:537px;width:86px;height:19px;background:#e9eef0;border:1px solid #6e6e6e;box-shadow:inset 1px 1px 0 #fafafa;"></div>
<div class="t" style="left:1057px;top:540px;width:82px;text-align:right;font-size:12px;color:#202020;letter-spacing:-0.15px;">0,000</div>
<div style="left:1145px;top:537px;width:104px;height:19px;background:#e9eef0;border:1px solid #6e6e6e;box-shadow:inset 1px 1px 0 #fafafa;"></div>
<div class="t" style="left:1145px;top:540px;width:100px;text-align:right;font-size:12px;color:#202020;letter-spacing:-0.15px;">0,00</div>
<div style="left:1251px;top:537px;width:92px;height:19px;background:#e9eef0;border:1px solid #6e6e6e;box-shadow:inset 1px 1px 0 #fafafa;"></div>
<div class="t" style="left:1251px;top:540px;width:69px;text-align:right;font-size:12px;color:#202020;letter-spacing:-0.15px;">0,000</div>
<div style="left:1346px;top:538px;width:64px;height:18px;background:#548a62;"></div>
<div class="t" style="left:1346px;top:542px;width:64px;text-align:center;font-size:11px;color:#fff;letter-spacing:-0.1px;">Noleggi</div>
<div style="left:985px;top:559px;width:70px;height:19px;background:#6e6e6e;"></div>
<div class="t" style="left:987px;top:562px;font-size:12px;color:#fff;letter-spacing:-0.1px;">Parcheggio</div>
<div style="left:1057px;top:559px;width:86px;height:19px;background:#e9eef0;border:1px solid #6e6e6e;box-shadow:inset 1px 1px 0 #fafafa;"></div>
<div class="t" style="left:1057px;top:562px;width:82px;text-align:right;font-size:12px;color:#202020;letter-spacing:-0.15px;">25,000</div>
<div style="left:1346px;top:560px;width:64px;height:18px;background:#548a62;"></div>
<div class="t" style="left:1346px;top:564px;width:64px;text-align:center;font-size:11px;color:#fff;letter-spacing:-0.1px;">Parcheggio</div>
<div style="left:985px;top:582px;width:70px;height:19px;background:#6e6e6e;"></div>
<div class="t" style="left:987px;top:585px;font-size:12px;color:#0c0cf8;letter-spacing:-0.1px;">Giac.FISICA</div>
<div style="left:1057px;top:582px;width:86px;height:19px;background:#e9eef0;border:1px solid #6e6e6e;box-shadow:inset 1px 1px 0 #fafafa;"></div>
<div class="t" style="left:1057px;top:585px;width:82px;text-align:right;font-size:12px;color:#202020;letter-spacing:-0.15px;">31,500</div>
<div style="left:986px;top:605px;width:263px;height:19px;background:#6e6e6e;"></div>
<div class="t" style="left:988px;top:608px;font-size:12px;color:#fff;letter-spacing:0.12px;">Valore giac.fiscale a prezzo medio acquisto</div>
<div style="left:1251px;top:605px;width:92px;height:19px;background:#e9eef0;border:1px solid #6e6e6e;box-shadow:inset 1px 1px 0 #fafafa;"></div>
<div class="t" style="left:1251px;top:608px;width:75px;text-align:right;font-size:12px;color:#202020;">251,860</div>
<div style="left:986px;top:627px;width:145px;height:21px;background:#6e6e6e;"></div>
<div class="t" style="left:988px;top:631px;font-size:12px;color:#fff;letter-spacing:0.1px;">Ubicazione (nel deposito</div>
<div style="left:1133px;top:627px;width:34px;height:21px;background:#e9eef0;border:1px solid #6e6e6e;box-shadow:inset 1px 1px 0 #fafafa;"></div>
<div class="t" style="left:1136px;top:631px;font-size:12px;">001</div>
<div style="left:1169px;top:627px;width:7px;height:21px;background:#6e6e6e;"></div>
<div class="t" style="left:1170px;top:631px;font-size:12px;color:#fff;">)</div>
<div style="left:1251px;top:627px;width:92px;height:19px;background:#e9eef0;border:1px solid #6e6e6e;box-shadow:inset 1px 1px 0 #fafafa;"></div>
<div style="left:557px;top:317px;width:419px;height:165px;border:1px solid #000;border-right-width:2px;border-bottom-width:1px;background:#fff;"></div>
<div style="left:558px;top:318px;width:10px;height:19px;background:#f0f0f0;border-right:1px solid #000;border-bottom:1px solid #000;box-shadow:inset 1px 1px 0 #fff;"></div>
<div style="left:558px;top:337px;width:10px;height:19px;background:#f0f0f0;border-right:1px solid #000;border-bottom:1px solid #000;box-shadow:inset 1px 1px 0 #fff;"></div>
<div style="left:558px;top:356px;width:10px;height:19px;background:#f0f0f0;border-right:1px solid #000;border-bottom:1px solid #000;box-shadow:inset 1px 1px 0 #fff;"></div>
<div style="left:558px;top:375px;width:10px;height:19px;background:#f0f0f0;border-right:1px solid #000;border-bottom:1px solid #000;box-shadow:inset 1px 1px 0 #fff;"></div>
<div style="left:558px;top:394px;width:10px;height:19px;background:#f0f0f0;border-right:1px solid #000;border-bottom:1px solid #000;box-shadow:inset 1px 1px 0 #fff;"></div>
<div style="left:558px;top:413px;width:10px;height:19px;background:#f0f0f0;border-right:1px solid #000;border-bottom:1px solid #000;box-shadow:inset 1px 1px 0 #fff;"></div>
<div style="left:558px;top:432px;width:10px;height:19px;background:#f0f0f0;border-right:1px solid #000;border-bottom:1px solid #000;box-shadow:inset 1px 1px 0 #fff;"></div>
<div style="left:558px;top:451px;width:10px;height:13px;background:#f0f0f0;border-right:1px solid #000;box-shadow:inset 1px 1px 0 #fff;"></div>
<div style="left:568px;top:318px;width:28px;height:19px;background:#e4e4e4;border-right:2px solid #6a6a6a;border-bottom:2px solid #6a6a6a;border-left:1px solid #fafafa;border-top:1px solid #fafafa;"></div>
<div class="t" style="left:568px;top:322px;width:28px;text-align:center;font-size:12px;overflow:hidden;">CodD</div>
<div style="left:596px;top:318px;width:103px;height:19px;background:#e4e4e4;border-right:2px solid #6a6a6a;border-bottom:2px solid #6a6a6a;border-left:1px solid #fafafa;border-top:1px solid #fafafa;"></div>
<div class="t" style="left:596px;top:322px;width:103px;text-align:center;font-size:12px;overflow:hidden;">Giac.Fiscale</div>
<div style="left:699px;top:318px;width:95px;height:19px;background:#e4e4e4;border-right:2px solid #6a6a6a;border-bottom:2px solid #6a6a6a;border-left:1px solid #fafafa;border-top:1px solid #fafafa;"></div>
<div class="t" style="left:699px;top:322px;width:95px;text-align:center;font-size:12px;overflow:hidden;">Ordini Forn.</div>
<div style="left:794px;top:318px;width:93px;height:19px;background:#e4e4e4;border-right:2px solid #6a6a6a;border-bottom:2px solid #6a6a6a;border-left:1px solid #fafafa;border-top:1px solid #fafafa;"></div>
<div class="t" style="left:794px;top:322px;width:93px;text-align:center;font-size:12px;overflow:hidden;">Ordini Clienti</div>
<div style="left:887px;top:318px;width:70px;height:19px;background:#e4e4e4;border-right:2px solid #6a6a6a;border-bottom:2px solid #6a6a6a;border-left:1px solid #fafafa;border-top:1px solid #fafafa;"></div>
<div class="t" style="left:887px;top:322px;width:70px;text-align:center;font-size:12px;overflow:hidden;">Presso Terzi</div>
<div style="left:568px;top:318px;width:28px;height:19px;background:#e4e4e4;border-right:2px solid #6a6a6a;border-bottom:2px solid #6a6a6a;"></div>
<div class="t" style="left:569px;top:322px;font-size:12px;width:26px;overflow:hidden;">CodD</div>
<svg style="position:absolute;left:568px;top:317px" width="10" height="6"><path d="M0.5,0.5L4.5,5L8.5,0.5Z" fill="#e8e8e8" stroke="#777"/></svg>
<div style="left:568px;top:337px;width:389px;height:18px;background:#c9e57b;border-bottom:2px solid #0a6fd0;border-left:1px solid #0a6fd0;border-right:2px solid #0a6fd0;"></div>
<div class="t" style="left:570px;top:340px;font-size:12px;">001</div>
<div class="t" style="left:596px;top:340px;width:100px;text-align:right;font-size:12px;color:#000;">56,500</div>
<div class="t" style="left:699px;top:340px;width:92px;text-align:right;font-size:12px;color:#000;">862,000</div>
<div class="t" style="left:794px;top:340px;width:90px;text-align:right;font-size:12px;color:#000;">39,500</div>
<div class="t" style="left:887px;top:340px;width:67px;text-align:right;font-size:12px;color:#000;">5,000</div>
<div style="left:568px;top:356px;width:389px;height:19px;border-bottom:1px solid #d0d8e8;"></div>
<div class="t" style="left:570px;top:359px;font-size:12px;">TPD</div>
<div class="t" style="left:596px;top:359px;width:100px;text-align:right;font-size:12px;color:#1a8a1a;">56,500</div>
<div class="t" style="left:699px;top:359px;width:92px;text-align:right;font-size:12px;color:#000;">862,000</div>
<div class="t" style="left:794px;top:359px;width:90px;text-align:right;font-size:12px;color:#000;">39,500</div>
<div class="t" style="left:887px;top:359px;width:67px;text-align:right;font-size:12px;color:#000;">5,000</div>
<div style="left:568px;top:375px;width:389px;height:19px;border-bottom:1px solid #d0d8e8;"></div>
<div class="t" style="left:570px;top:378px;font-size:12px;">TCL</div>
<div style="left:568px;top:394px;width:389px;height:19px;border-bottom:1px solid #d0d8e8;"></div>
<div class="t" style="left:570px;top:397px;font-size:12px;">TOT</div>
<div class="t" style="left:596px;top:397px;width:100px;text-align:right;font-size:12px;color:#1a8a1a;">56,500</div>
<div class="t" style="left:699px;top:397px;width:92px;text-align:right;font-size:12px;color:#000;">862,000</div>
<div class="t" style="left:794px;top:397px;width:90px;text-align:right;font-size:12px;color:#000;">39,500</div>
<div class="t" style="left:887px;top:397px;width:67px;text-align:right;font-size:12px;color:#000;">5,000</div>
<div style="left:568px;top:413px;width:389px;height:19px;border-bottom:1px solid #d0d8e8;"></div>
<div class="t" style="left:570px;top:416px;font-size:12px;"></div>
<div style="left:568px;top:432px;width:389px;height:19px;border-bottom:1px solid #d0d8e8;"></div>
<div class="t" style="left:570px;top:435px;font-size:12px;"></div>
<div class="t" style="left:570px;top:454px;font-size:12px;"></div>
<div style="left:595px;top:355px;width:1px;height:109px;background:#d0d8e8;"></div>
<div style="left:698px;top:355px;width:1px;height:109px;background:#d0d8e8;"></div>
<div style="left:793px;top:355px;width:1px;height:109px;background:#d0d8e8;"></div>
<div style="left:886px;top:355px;width:1px;height:109px;background:#d0d8e8;"></div>
<svg style="position:absolute;left:562px;top:342px" width="6" height="10"><path d="M0,0L5,5L0,10Z" fill="#000"/></svg>
<div style="left:957px;top:318px;width:17px;height:146px;"></div>
<div class="chk" style="left:957px;top:336px;width:17px;height:112px;"></div>
<div style="left:957px;top:318px;width:17px;height:17px;"></div>
<div class="b3" style="left:957px;top:318px;width:17px;height:17px;"></div>
<div class="b3" style="left:957px;top:448px;width:17px;height:17px;"></div>
<svg style="position:absolute;left:961px;top:324px" width="9" height="6"><path d="M1,4.5L4.5,0.5L8,4.5Z" fill="#a0a0a0"/></svg>
<svg style="position:absolute;left:961px;top:454px" width="9" height="6"><path d="M1,0.5L4.5,4.5L8,0.5Z" fill="#a0a0a0"/></svg>
<div class="chk" style="left:558px;top:464px;width:399px;height:17px;"></div>
<div class="b3" style="left:558px;top:464px;width:17px;height:17px;"></div>
<div class="b3" style="left:574px;top:464px;width:18px;height:17px;"></div>
<div class="b3" style="left:941px;top:464px;width:17px;height:17px;"></div>
<div style="left:957px;top:464px;width:17px;height:17px;background:#fff;"></div>
<svg style="position:absolute;left:563px;top:469px" width="6" height="10"><path d="M4.5,0L0.5,3.8L4.5,7.6Z" fill="#000"/></svg>
<svg style="position:absolute;left:948px;top:469px" width="6" height="10"><path d="M0,0L4.5,3.8L0,7.6Z" fill="#000"/></svg>
<div style="left:669px;top:491px;width:114px;height:21px;background:#6e6e6e;"></div>
<div class="t" style="left:671px;top:494px;font-size:12px;color:#fff;">Quantità</div>
<div style="left:572px;top:513px;width:95px;height:21px;background:#6e6e6e;"></div>
<div class="t" style="left:574px;top:517px;font-size:12px;color:#fff;letter-spacing:-0.05px;">Ordine cliente</div>
<div style="left:669px;top:513px;width:114px;height:21px;background:#e9eef0;border:1px solid #6e6e6e;box-shadow:inset 1px 1px 0 #fafafa;"></div>
<div class="t" style="left:669px;top:517px;width:110px;text-align:right;font-size:12px;color:#202020;">39,500</div>
<div style="left:572px;top:535px;width:95px;height:21px;background:#6e6e6e;"></div>
<div class="t" style="left:574px;top:539px;font-size:12px;color:#fff;letter-spacing:-0.05px;">Ordine fornitore</div>
<div style="left:669px;top:535px;width:114px;height:21px;background:#e9eef0;border:1px solid #6e6e6e;box-shadow:inset 1px 1px 0 #fafafa;"></div>
<div class="t" style="left:669px;top:539px;width:110px;text-align:right;font-size:12px;color:#202020;">862,000</div>
<div style="left:572px;top:557px;width:95px;height:21px;background:#6e6e6e;"></div>
<div class="t" style="left:574px;top:561px;font-size:12px;color:#fff;letter-spacing:-0.05px;">Disponibilità</div>
<div style="left:669px;top:557px;width:114px;height:21px;background:#e9eef0;border:1px solid #6e6e6e;box-shadow:inset 1px 1px 0 #fafafa;"></div>
<div class="t" style="left:669px;top:561px;width:110px;text-align:right;font-size:12px;color:#202020;">849,00</div>
<div style="left:572px;top:579px;width:95px;height:21px;background:#6e6e6e;"></div>
<div class="t" style="left:574px;top:583px;font-size:12px;color:#fff;letter-spacing:-0.05px;">Di terzi</div>
<div style="left:669px;top:579px;width:114px;height:21px;background:#e9eef0;border:1px solid #6e6e6e;box-shadow:inset 1px 1px 0 #fafafa;"></div>
<div class="t" style="left:669px;top:583px;width:110px;text-align:right;font-size:12px;color:#202020;">5,00</div>
<div style="left:572px;top:601px;width:95px;height:21px;background:#6e6e6e;"></div>
<div class="t" style="left:574px;top:605px;font-size:12px;color:#fff;letter-spacing:-0.05px;">Presso terzi</div>
<div style="left:669px;top:601px;width:114px;height:21px;background:#e9eef0;border:1px solid #6e6e6e;box-shadow:inset 1px 1px 0 #fafafa;"></div>
<div class="t" style="left:669px;top:605px;width:110px;text-align:right;font-size:12px;color:#202020;">5,00</div>
<div style="left:903px;top:516px;width:64px;height:18px;background:#548a62;"></div>
<div class="t" style="left:903px;top:520px;width:64px;text-align:center;font-size:11px;color:#fff;">Ord. clienti</div>
<div style="left:903px;top:538px;width:64px;height:18px;background:#548a62;"></div>
<div class="t" style="left:903px;top:542px;width:64px;text-align:center;font-size:11px;color:#fff;">Ord. fornitor</div>
<div style="left:563px;top:633px;width:92px;height:25px;background:#548a62;"></div>
<div style="left:597px;top:636px;width:24px;height:19px;background:#fff;"></div>
<svg style="position:absolute;left:597px;top:636px" width="24" height="19">
<rect x="6.6" y="1.6" width="10.2" height="2.2" fill="#fff" stroke="#00882a" stroke-width="1.2"/>
<rect x="2.6" y="3.7" width="18.2" height="8.9" fill="#f2f2f2" stroke="#00882a" stroke-width="1.3"/>
<circle cx="15.6" cy="5.8" r="0.8" fill="#00882a"/><circle cx="17.7" cy="5.8" r="0.8" fill="#00882a"/>
<rect x="4.8" y="12.6" width="1.8" height="5" fill="#fff" stroke="#00882a" stroke-width="1.1"/>
<rect x="17.0" y="12.6" width="1.8" height="5" fill="#fff" stroke="#00882a" stroke-width="1.1"/>
<rect x="6.6" y="10.6" width="10.2" height="7.8" fill="#fff" stroke="#00882a" stroke-width="1.3"/>
<path d="M8.3,12.6h6.8M8.3,14.6h6.8M8.3,16.5h3.6" stroke="#00882a" stroke-width="1.1"/>
</svg>
<div style="left:656px;top:633px;width:92px;height:25px;background:#548a62;"></div>
<div class="t" style="left:656px;top:640px;width:92px;text-align:center;font-size:11px;color:#fff;">Scheda magaz.</div>
<div style="left:749px;top:633px;width:92px;height:25px;background:#548a62;"></div>
<div class="t" style="left:749px;top:640px;width:92px;text-align:center;font-size:12px;color:#fff;">Equivalenze</div>
<div style="left:842px;top:633px;width:92px;height:25px;background:#548a62;"></div>
<div class="t" style="left:842px;top:640px;width:92px;text-align:center;font-size:11px;color:#fff;letter-spacing:-0.1px;">Scorte/ubicazioni</div>
<svg style="position:absolute;left:976px;top:182px" width="13" height="20"><path d="M0.5,0.5L0.5,16L4.2,12.6L6.8,18.6L9.4,17.5L6.9,11.7L11.8,11.7Z" fill="#fff" stroke="#000" stroke-width="1"/></svg>
</body></html>
